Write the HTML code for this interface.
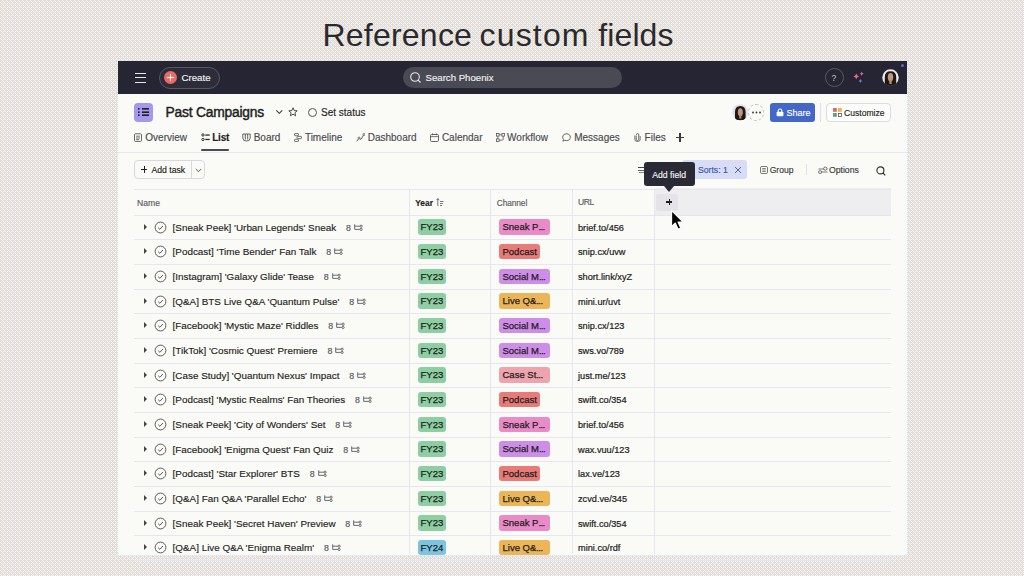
<!DOCTYPE html>
<html><head><meta charset="utf-8"><style>
*{margin:0;padding:0;box-sizing:border-box}
html,body{width:1024px;height:576px;overflow:hidden}
body{font-family:"Liberation Sans",sans-serif;background:#e9e5e2;position:relative;color:#1e1f21}
.abs{position:absolute}
#bgsvg{position:absolute;left:0;top:0}
.title{position:absolute;left:323px;top:17px;font-size:32px;letter-spacing:0.45px;color:#2a2a2c;white-space:nowrap;line-height:36px}
.win{position:absolute;left:118px;top:61px;width:789px;height:493.5px;background:#fafaf7;overflow:hidden}
.topbar{position:absolute;left:0;top:0;width:789px;height:33px;background:#252534}
.w{position:absolute;white-space:nowrap;line-height:12px}
.tab{position:absolute;top:132px;font-size:10px;color:#4a4a4d;white-space:nowrap;line-height:12px}
.hline{position:absolute;height:1px;background:#e6e6ec}
.vline{position:absolute;width:1px;background:#e6e6ec}
.row{position:absolute;left:0;width:1024px;height:24.667px}
.row .tri{position:absolute;left:144px;top:8.6px;width:0;height:0;border-left:3.8px solid #444;border-top:3px solid transparent;border-bottom:3px solid transparent}
.row .chk{position:absolute;left:153.7px;top:5.7px}
.row .tname{position:absolute;left:172.6px;top:6.5px;font-size:9.9px;line-height:12px;white-space:nowrap;color:#1e1f21}
.row .sub{margin-left:9.8px;font-size:8.8px;color:#555}
.row .sub svg{margin-left:3.2px;vertical-align:-0.3px}
.pill{position:absolute;top:4.3px;height:15.5px;border-radius:3px;font-size:9.5px;line-height:15.5px;padding:0 3.5px;white-space:nowrap;overflow:hidden;color:#1e1f21}
.pill.yr{left:418px;width:28.3px;background:#8dcea2;padding:0 2.5px}
.pill.yr.fy24{background:#7cc5e0}
.pill.ch{left:499px}
.pill.tr{width:50.8px}
.pink{background:#ea8bc8}
.red{background:#e87a78}
.purple{background:#cf8dea}
.orange{background:#ecb558}
.coral{background:#eea3ae}
.url{position:absolute;left:578px;top:6.5px;font-size:9.2px;line-height:12px;color:#1e1f21;white-space:nowrap}
.pill i{font-style:normal;letter-spacing:-0.6px}
.tname,.url,.pill,.tab,.w{-webkit-text-stroke:0.15px currentColor}
.pill{-webkit-text-stroke:0.25px currentColor}
.url{-webkit-text-stroke:0.22px currentColor}

</style></head><body>
<svg id="bgsvg" width="1024" height="576"><defs><pattern id="dz" width="4" height="4" patternUnits="userSpaceOnUse">
<rect width="4" height="4" fill="#d9d9fb"/>
<rect x="0" y="0" width="1" height="1" fill="#fdd6a6"/><rect x="2" y="0" width="1" height="1" fill="#fbfba6"/>
<rect x="1" y="1" width="1" height="1" fill="#fbfba6"/><rect x="3" y="1" width="1" height="1" fill="#f7f7fd"/>
<rect x="0" y="2" width="1" height="1" fill="#fbfba6"/><rect x="2" y="2" width="1" height="1" fill="#fdd6a6"/>
<rect x="1" y="3" width="1" height="1" fill="#f7f7fd"/><rect x="3" y="3" width="1" height="1" fill="#f7f7fd"/>
</pattern></defs><rect width="1024" height="576" fill="url(#dz)"/></svg>
<div class="title" style="left:322.5px;letter-spacing:0.22px">Reference</div><div class="title" style="left:479.6px;letter-spacing:1.15px">custom</div><div class="title" style="left:598.3px;letter-spacing:0.1px">fields</div>
<div class="win">
 <div class="topbar"></div>
</div>
<!-- absolute page coords below -->
<!-- hamburger -->
<div class="abs" style="left:135px;top:72.5px;width:11px;height:1.2px;background:#e8e8e8"></div>
<div class="abs" style="left:135px;top:77px;width:11px;height:1.2px;background:#e8e8e8"></div>
<div class="abs" style="left:135px;top:81.5px;width:11px;height:1.2px;background:#e8e8e8"></div>
<!-- create -->
<div class="abs" style="left:159px;top:66.5px;width:60.5px;height:22px;border-radius:11px;border:1px solid #58585e;background:#2c2c3a"></div>
<div class="abs" style="left:163.6px;top:70.9px;width:13px;height:13px;border-radius:50%;background:#ee6b64"></div>
<div class="abs" style="left:169.5px;top:74px;width:1.3px;height:7px;background:#fff"></div>
<div class="abs" style="left:166.6px;top:76.9px;width:7px;height:1.3px;background:#fff"></div>
<div class="w" style="left:181.5px;top:71.5px;font-size:9.7px;color:#f2f2f2">Create</div>
<!-- search -->
<div class="abs" style="left:402.7px;top:66.8px;width:219.3px;height:21.5px;border-radius:11px;background:#4a4a55"></div>
<svg class="abs" style="left:409px;top:71px" width="13" height="13" viewBox="0 0 13 13"><circle cx="6" cy="6" r="4.3" fill="none" stroke="#e6e6e6" stroke-width="1.1"/><path d="M9.1 9.1 L11.5 11.5" stroke="#e6e6e6" stroke-width="1.1"/></svg>
<div class="w" style="left:425.5px;top:71.5px;font-size:9.65px;color:#f0f0f0">Search Phoenix</div>
<!-- help -->
<div class="abs" style="left:825px;top:68px;width:18.8px;height:18.8px;border-radius:50%;border:1px solid #5a5a5e"></div>
<div class="abs" style="left:831.6px;top:72.5px;font-size:8.5px;line-height:10px;color:#c8c8c8;font-family:'Liberation Sans',sans-serif">?</div>
<!-- sparkles -->
<svg class="abs" style="left:850px;top:70px" width="16" height="16" viewBox="0 0 16 16">
<path d="M6.3 3.6 Q6.8 5.9 9 6.4 Q6.8 6.9 6.3 9.2 Q5.8 6.9 3.6 6.4 Q5.8 5.9 6.3 3.6Z" fill="#e96a7c"/>
<path d="M11.7 1.6 Q12 3.3 13.6 3.7 Q12 4.1 11.7 5.8 Q11.4 4.1 9.8 3.7 Q11.4 3.3 11.7 1.6Z" fill="#d66f9e"/>
<path d="M10.4 8.8 Q10.7 10.5 12.3 10.9 Q10.7 11.3 10.4 13 Q10.1 11.3 8.5 10.9 Q10.1 10.5 10.4 8.8Z" fill="#6e7ad8"/>
</svg>
<!-- avatar top -->
<svg class="abs" style="left:882px;top:69px" width="17" height="17" viewBox="0 0 17 17"><defs><clipPath id="ca1"><circle cx="8.5" cy="8.5" r="8.2"/></clipPath></defs>
<g clip-path="url(#ca1)"><rect width="17" height="17" fill="#ecebf2"/><path d="M2.8 17 V8 Q2.8 2.2 8.5 2.2 Q14.2 2.2 14.2 8 V17Z" fill="#1d1716"/><ellipse cx="8.5" cy="8.3" rx="2.7" ry="4.2" fill="#c3977c"/><path d="M3 17 Q4 13 8.5 13.5 Q13 13 14 17Z" fill="#1d1716"/><rect x="7.3" y="11" width="2.4" height="4" fill="#b58a70"/></g></svg>
<div class="abs" style="left:900.5px;top:63.8px;width:3.6px;height:3.6px;border-radius:50%;background:#6266e0"></div>

<!-- project header -->
<div class="abs" style="left:134px;top:102.6px;width:19.2px;height:19.2px;border-radius:4px;background:#a597ee"></div>
<svg class="abs" style="left:137px;top:107px" width="13" height="10" viewBox="0 0 13 10">
<g fill="#1e1f21"><rect x="1" y="1" width="1.6" height="1.6"/><rect x="1" y="4.4" width="1.6" height="1.6"/><rect x="1" y="7.4" width="1.6" height="1.6"/>
<rect x="5" y="1" width="7" height="1.6"/><rect x="5" y="4.4" width="7" height="1.6"/><rect x="5" y="7.4" width="7" height="1.6"/></g></svg>
<div class="w" style="left:165.5px;top:105.3px;font-size:13.8px;line-height:16px;letter-spacing:-0.2px;color:#1e1f21;-webkit-text-stroke:0.45px #1e1f21">Past Campaigns</div>
<svg class="abs" style="left:275px;top:109px" width="9" height="6" viewBox="0 0 9 6"><path d="M1.3 1.3 L4.3 4.3 L7.3 1.3" fill="none" stroke="#3a3a3c" stroke-width="1.1"/></svg>
<svg class="abs" style="left:288px;top:107px" width="10" height="10" viewBox="0 0 10 10"><path d="M5 0.8 L6.2 3.6 L9.2 3.8 L6.9 5.8 L7.6 8.8 L5 7.2 L2.4 8.8 L3.1 5.8 L0.8 3.8 L3.8 3.6Z" fill="none" stroke="#3a3a3c" stroke-width="0.9" stroke-linejoin="round"/></svg>
<div class="abs" style="left:308px;top:108.2px;width:9px;height:9px;border-radius:50%;border:1px solid #555"></div>
<div class="w" style="left:321px;top:106.5px;font-size:10px;color:#1e1f21">Set status</div>

<!-- right header -->
<div class="abs" style="left:748px;top:104px;width:15.5px;height:16.5px;border-radius:50%;border:1px dashed #c5c5d0;background:#fafaf7"></div>
<svg class="abs" style="left:750.5px;top:111px" width="11" height="3" viewBox="0 0 11 3"><circle cx="2" cy="1.5" r="0.9" fill="#333"/><circle cx="5.5" cy="1.5" r="0.9" fill="#333"/><circle cx="9" cy="1.5" r="0.9" fill="#333"/></svg>
<svg class="abs" style="left:731.8px;top:104px" width="16.5" height="16.5" viewBox="0 0 16.5 16.5"><defs><clipPath id="ca2"><circle cx="8.25" cy="8.25" r="8"/></clipPath></defs>
<g clip-path="url(#ca2)"><rect width="16.5" height="16.5" fill="#e2e1ea"/><path d="M3 16.5 V8 Q3 2 8.3 2 Q13.6 2 13.6 8 V16.5Z" fill="#1d1716"/><ellipse cx="8.3" cy="8.3" rx="2.5" ry="4" fill="#c3977c"/><path d="M2 16.5 Q4 13.2 8.3 13.6 Q12.6 13.2 14.6 16.5Z" fill="#1d1716"/><rect x="7.2" y="11" width="2.2" height="3.5" fill="#b58a70"/></g></svg>
<div class="abs" style="left:769.8px;top:102.8px;width:45px;height:19px;border-radius:3px;background:#4267c8"></div>
<svg class="abs" style="left:776px;top:107.5px" width="8" height="9" viewBox="0 0 8 9"><path d="M2.2 4 V2.8 A1.8 1.8 0 0 1 5.8 2.8 V4" fill="none" stroke="#fff" stroke-width="1.1"/><rect x="0.6" y="3.8" width="6.8" height="4.4" rx="0.8" fill="#fff"/></svg>
<div class="w" style="left:786.6px;top:106.5px;font-size:9px;color:#fff">Share</div>
<div class="vline" style="left:820px;top:103px;height:19px;background:#e0e0e6"></div>
<div class="abs" style="left:826.3px;top:102.8px;width:64.4px;height:19px;border-radius:4px;border:1px solid #dcdce2;background:#fdfdfc"></div>
<svg class="abs" style="left:832.5px;top:107.5px" width="9" height="9" viewBox="0 0 9 9"><rect x="0" y="0" width="3.8" height="3.8" fill="#e06a5e"/><rect x="5" y="0" width="3.8" height="3.8" fill="#e2b65c"/><rect x="0" y="5" width="3.8" height="3.8" fill="#5da37d"/><rect x="5.4" y="5.4" width="3" height="3" fill="none" stroke="#555" stroke-width="0.8"/></svg>
<div class="w" style="left:844px;top:106.5px;font-size:8.6px;color:#1e1f21">Customize</div>

<!-- tabs -->
<svg class="abs" style="left:134px;top:133px" width="8" height="9" viewBox="0 0 8 9"><rect x="0.5" y="0.8" width="7" height="7.6" rx="1" fill="none" stroke="#555" stroke-width="0.9"/><path d="M2 3.2 H6 M2 5 H6 M2 6.6 H5" stroke="#555" stroke-width="0.8"/></svg>
<div class="tab" style="left:145.3px">Overview</div>
<svg class="abs" style="left:200.5px;top:132.8px" width="10" height="9" viewBox="0 0 10 9"><g fill="none" stroke="#1e1f21" stroke-width="1"><rect x="0.9" y="0.9" width="2.2" height="2.2" rx="1"/><rect x="0.9" y="5.4" width="2.2" height="2.2" rx="1"/></g><g fill="#2a2a2c"><rect x="4.3" y="1.4" width="4.4" height="1.3"/><rect x="4.3" y="5.8" width="4.4" height="1.3"/></g></svg>
<div class="tab" style="left:212.2px;font-weight:bold;color:#1e1f21;letter-spacing:-0.2px">List</div>
<div class="abs" style="left:201px;top:149.3px;width:28px;height:2px;background:#4b4b4f;border-radius:1px"></div>
<svg class="abs" style="left:242px;top:133px" width="9" height="9" viewBox="0 0 9 9"><path d="M0.8 1 H8.2 V5 Q8.2 8 4.5 8 Q0.8 8 0.8 5Z M3.3 1 V6.5 M5.7 1 V6.5" fill="none" stroke="#555" stroke-width="0.9"/></svg>
<div class="tab" style="left:253.7px">Board</div>
<svg class="abs" style="left:294px;top:133px" width="8" height="9" viewBox="0 0 8 9"><rect x="0.5" y="0.5" width="4" height="2.2" rx="0.6" fill="none" stroke="#555" stroke-width="0.8"/><rect x="3" y="3.4" width="4.5" height="2.2" rx="0.6" fill="none" stroke="#555" stroke-width="0.8"/><rect x="0.5" y="6.3" width="4" height="2.2" rx="0.6" fill="none" stroke="#555" stroke-width="0.8"/></svg>
<div class="tab" style="left:304.9px">Timeline</div>
<svg class="abs" style="left:356px;top:133px" width="9" height="9" viewBox="0 0 9 9"><path d="M0.8 8.2 L3 5 L5 6.5 L8 1.2" fill="none" stroke="#555" stroke-width="0.9"/><circle cx="3" cy="5" r="1" fill="#fbfbfa" stroke="#555" stroke-width="0.8"/><circle cx="8" cy="1.5" r="1" fill="#fbfbfa" stroke="#555" stroke-width="0.8"/></svg>
<div class="tab" style="left:367.7px">Dashboard</div>
<svg class="abs" style="left:430px;top:133px" width="9" height="9" viewBox="0 0 9 9"><rect x="0.5" y="1.5" width="8" height="7" rx="1.2" fill="none" stroke="#555" stroke-width="0.9"/><path d="M0.5 3.6 H8.5 M2.6 0.3 V2.2 M6.4 0.3 V2.2" stroke="#555" stroke-width="0.8"/></svg>
<div class="tab" style="left:441.9px">Calendar</div>
<svg class="abs" style="left:496px;top:133px" width="9" height="9" viewBox="0 0 9 9"><rect x="0.5" y="0.5" width="2.6" height="2.6" fill="none" stroke="#555" stroke-width="0.8"/><rect x="5.9" y="0.5" width="2.6" height="2.6" fill="none" stroke="#555" stroke-width="0.8"/><rect x="0.5" y="5.9" width="2.6" height="2.6" fill="none" stroke="#555" stroke-width="0.8"/><path d="M3.1 1.8 H5.9 M1.8 3.1 V5.9 M3.1 7.2 H6 Q7.2 7.2 7.2 6 V3.1" fill="none" stroke="#555" stroke-width="0.8"/></svg>
<div class="tab" style="left:507.1px">Workflow</div>
<svg class="abs" style="left:562px;top:133px" width="9" height="9" viewBox="0 0 9 9"><path d="M4.5 0.8 C7 0.8 8.3 2.3 8.3 4.2 C8.3 6.1 7 7.6 4.5 7.6 C3.8 7.6 3.2 7.5 2.7 7.3 L0.9 8.2 L1.4 6.5 C0.9 5.9 0.7 5.1 0.7 4.2 C0.7 2.3 2 0.8 4.5 0.8Z" fill="none" stroke="#555" stroke-width="0.9"/></svg>
<div class="tab" style="left:574.2px">Messages</div>
<svg class="abs" style="left:634px;top:133px" width="7" height="9" viewBox="0 0 7 9"><path d="M2.2 2.5 V6.2 Q2.2 7.5 3.5 7.5 Q4.8 7.5 4.8 6.2 V1.8 Q4.8 0.6 3.6 0.6 Q2.4 0.6 2.4 1.8" fill="none" stroke="#555" stroke-width="0.9"/><path d="M0.8 2.5 V6.5 Q0.8 8.5 3.5 8.5 Q6.2 8.5 6.2 6.5 V3" fill="none" stroke="#555" stroke-width="0.8"/></svg>
<div class="tab" style="left:644.6px">Files</div>
<div class="abs" style="left:675.7px;top:137px;width:8.6px;height:1.2px;background:#3a3a3c"></div>
<div class="abs" style="left:679.4px;top:133.3px;width:1.2px;height:8.6px;background:#3a3a3c"></div>
<div class="hline" style="left:118px;top:151.5px;width:789px"></div>

<!-- toolbar -->
<div class="abs" style="left:134.2px;top:160.3px;width:70.8px;height:19px;border-radius:4px;border:1px solid #d8d8de"></div>
<div class="vline" style="left:190.5px;top:161px;height:18px;background:#d8d8de"></div>
<div class="abs" style="left:140.8px;top:169px;width:6.6px;height:1.1px;background:#1e1f21"></div>
<div class="abs" style="left:143.6px;top:166.2px;width:1.1px;height:6.6px;background:#1e1f21"></div>
<div class="w" style="left:151.4px;top:164px;font-size:8.7px;color:#1e1f21">Add task</div>
<svg class="abs" style="left:194.5px;top:167.5px" width="7" height="5" viewBox="0 0 7 5"><path d="M0.8 1 L3.5 3.7 L6.2 1" fill="none" stroke="#444" stroke-width="0.9"/></svg>

<!-- sort icon partially -->
<div class="abs" style="left:637.5px;top:167px;width:7px;height:1px;background:#444"></div>
<div class="abs" style="left:637.5px;top:169.8px;width:6px;height:1px;background:#666"></div>
<div class="abs" style="left:639px;top:172.3px;width:5px;height:1px;background:#888"></div>
<!-- sorts chip -->
<div class="abs" style="left:682px;top:159.9px;width:65px;height:19px;border-radius:3px;background:#d8dcf6"></div>
<div class="w" style="left:697.9px;top:164px;font-size:8.7px;color:#3d5a9c">Sorts: 1</div>
<svg class="abs" style="left:734px;top:165.5px" width="8" height="8" viewBox="0 0 8 8"><path d="M1 1 L7 7 M7 1 L1 7" stroke="#3d5a9c" stroke-width="0.9"/></svg>
<!-- group -->
<svg class="abs" style="left:759.5px;top:166px" width="8" height="8" viewBox="0 0 8 8"><rect x="0.5" y="0.5" width="7" height="7" rx="1.3" fill="none" stroke="#555" stroke-width="0.8"/><path d="M2.2 2.5 H5.8 M2.2 4 H5.8 M2.2 5.5 H5.8" stroke="#555" stroke-width="0.7"/></svg>
<div class="w" style="left:769.7px;top:164px;font-size:8.6px;color:#3a3a3c">Group</div>
<div class="vline" style="left:806px;top:164px;height:11px;background:#e0e0e6"></div>
<svg class="abs" style="left:817.5px;top:165.5px" width="10" height="9" viewBox="0 0 10 9"><path d="M0.5 6 H9.5 M0.5 3 H9.5" stroke="#555" stroke-width="0.8"/><rect x="0.8" y="4.8" width="2.6" height="2.6" rx="0.5" fill="#fbfbfa" stroke="#555" stroke-width="0.8"/><circle cx="7.3" cy="2.6" r="1.6" fill="#fbfbfa" stroke="#555" stroke-width="0.8"/></svg>
<div class="w" style="left:828.9px;top:164px;font-size:8.7px;color:#3a3a3c">Options</div>
<svg class="abs" style="left:876px;top:165.5px" width="10" height="10" viewBox="0 0 10 10"><circle cx="4.4" cy="4.4" r="3.5" fill="none" stroke="#2e2e30" stroke-width="1.1"/><path d="M7 7 L9.3 9.3" stroke="#2e2e30" stroke-width="1.1"/></svg>

<!-- table header -->
<div class="abs" style="left:653.75px;top:188px;width:236.75px;height:27px;background:#eeeef0"></div>
<div class="abs" style="left:655.5px;top:193.5px;width:22.5px;height:17.5px;background:#e5e3e8;border-radius:2px"></div>
<div class="hline" style="left:134px;top:188.9px;width:756.5px"></div>
<div class="w" style="left:137px;top:196.5px;font-size:8.6px;color:#5a5b5e">Name</div>
<div class="w" style="left:415.2px;top:196.5px;font-size:8.4px;font-weight:bold;color:#1e1f21">Year</div>
<svg class="abs" style="left:436px;top:197.5px" width="8" height="9" viewBox="0 0 8 9"><path d="M1.8 0.6 V8 M0.3 2.2 L1.8 0.6 L3.3 2.2 M4 3.5 H7.5 M4 5.5 H6.8 M4 7.5 H6" fill="none" stroke="#555" stroke-width="0.8"/></svg>
<div class="w" style="left:496.7px;top:196.5px;font-size:8.4px;color:#5a5b5e;letter-spacing:-0.1px">Channel</div>
<div class="w" style="left:578px;top:196px;font-size:8.6px;color:#5a5b5e;letter-spacing:-0.4px">URL</div>
<div class="abs" style="left:666.2px;top:201.3px;width:6px;height:1.4px;background:#1e1f21"></div>
<div class="abs" style="left:668.5px;top:199px;width:1.4px;height:6px;background:#1e1f21"></div>
<div class="vline" style="left:409.3px;top:189px;height:365px"></div>
<div class="vline" style="left:490.4px;top:189px;height:365px"></div>
<div class="vline" style="left:572.4px;top:189px;height:365px"></div>
<div class="vline" style="left:653.75px;top:189px;height:365px"></div>
<div class="hline" style="left:134px;top:214.50px;width:756.5px"></div>
<div class="hline" style="left:134px;top:239.17px;width:756.5px"></div>
<div class="hline" style="left:134px;top:263.83px;width:756.5px"></div>
<div class="hline" style="left:134px;top:288.50px;width:756.5px"></div>
<div class="hline" style="left:134px;top:313.17px;width:756.5px"></div>
<div class="hline" style="left:134px;top:337.84px;width:756.5px"></div>
<div class="hline" style="left:134px;top:362.50px;width:756.5px"></div>
<div class="hline" style="left:134px;top:387.17px;width:756.5px"></div>
<div class="hline" style="left:134px;top:411.84px;width:756.5px"></div>
<div class="hline" style="left:134px;top:436.50px;width:756.5px"></div>
<div class="hline" style="left:134px;top:461.17px;width:756.5px"></div>
<div class="hline" style="left:134px;top:485.84px;width:756.5px"></div>
<div class="hline" style="left:134px;top:510.50px;width:756.5px"></div>
<div class="hline" style="left:134px;top:535.17px;width:756.5px"></div>
<div class="hline" style="left:134px;top:559.84px;width:756.5px"></div>
<div class="row" style="top:215.000px">
<div class="tri"></div>
<svg class="chk" width="13" height="13" viewBox="0 0 13 13"><circle cx="6.5" cy="6.5" r="5.4" fill="none" stroke="#5a5b5d" stroke-width="1"/><path d="M4.2 6.7 L5.9 8.3 L8.9 5" fill="none" stroke="#5a5b5d" stroke-width="1"/></svg>
<div class="tname">[Sneak Peek] 'Urban Legends' Sneak<span class="sub">8<svg width="9" height="7" viewBox="0 0 9 7"><path d="M0.7 0.3 V5.4 H5.8 M0.7 2.2 H5.8" fill="none" stroke="#5a5b5d" stroke-width="0.9"/><circle cx="7.1" cy="2.2" r="1.1" fill="none" stroke="#5a5b5d" stroke-width="0.9"/><circle cx="7.1" cy="5.4" r="1.1" fill="none" stroke="#5a5b5d" stroke-width="0.9"/></svg></span></div>
<div class="pill yr ">FY23</div>
<div class="pill ch pink tr">Sneak P<i>...</i></div>
<div class="url">brief.to/456</div>
</div>
<div class="row" style="top:239.667px">
<div class="tri"></div>
<svg class="chk" width="13" height="13" viewBox="0 0 13 13"><circle cx="6.5" cy="6.5" r="5.4" fill="none" stroke="#5a5b5d" stroke-width="1"/><path d="M4.2 6.7 L5.9 8.3 L8.9 5" fill="none" stroke="#5a5b5d" stroke-width="1"/></svg>
<div class="tname">[Podcast] 'Time Bender' Fan Talk<span class="sub">8<svg width="9" height="7" viewBox="0 0 9 7"><path d="M0.7 0.3 V5.4 H5.8 M0.7 2.2 H5.8" fill="none" stroke="#5a5b5d" stroke-width="0.9"/><circle cx="7.1" cy="2.2" r="1.1" fill="none" stroke="#5a5b5d" stroke-width="0.9"/><circle cx="7.1" cy="5.4" r="1.1" fill="none" stroke="#5a5b5d" stroke-width="0.9"/></svg></span></div>
<div class="pill yr ">FY23</div>
<div class="pill ch red">Podcast</div>
<div class="url">snip.cx/uvw</div>
</div>
<div class="row" style="top:264.334px">
<div class="tri"></div>
<svg class="chk" width="13" height="13" viewBox="0 0 13 13"><circle cx="6.5" cy="6.5" r="5.4" fill="none" stroke="#5a5b5d" stroke-width="1"/><path d="M4.2 6.7 L5.9 8.3 L8.9 5" fill="none" stroke="#5a5b5d" stroke-width="1"/></svg>
<div class="tname">[Instagram] 'Galaxy Glide' Tease<span class="sub">8<svg width="9" height="7" viewBox="0 0 9 7"><path d="M0.7 0.3 V5.4 H5.8 M0.7 2.2 H5.8" fill="none" stroke="#5a5b5d" stroke-width="0.9"/><circle cx="7.1" cy="2.2" r="1.1" fill="none" stroke="#5a5b5d" stroke-width="0.9"/><circle cx="7.1" cy="5.4" r="1.1" fill="none" stroke="#5a5b5d" stroke-width="0.9"/></svg></span></div>
<div class="pill yr ">FY23</div>
<div class="pill ch purple tr">Social M<i>...</i></div>
<div class="url">short.link/xyZ</div>
</div>
<div class="row" style="top:289.001px">
<div class="tri"></div>
<svg class="chk" width="13" height="13" viewBox="0 0 13 13"><circle cx="6.5" cy="6.5" r="5.4" fill="none" stroke="#5a5b5d" stroke-width="1"/><path d="M4.2 6.7 L5.9 8.3 L8.9 5" fill="none" stroke="#5a5b5d" stroke-width="1"/></svg>
<div class="tname">[Q&amp;A] BTS Live Q&amp;A 'Quantum Pulse'<span class="sub">8<svg width="9" height="7" viewBox="0 0 9 7"><path d="M0.7 0.3 V5.4 H5.8 M0.7 2.2 H5.8" fill="none" stroke="#5a5b5d" stroke-width="0.9"/><circle cx="7.1" cy="2.2" r="1.1" fill="none" stroke="#5a5b5d" stroke-width="0.9"/><circle cx="7.1" cy="5.4" r="1.1" fill="none" stroke="#5a5b5d" stroke-width="0.9"/></svg></span></div>
<div class="pill yr ">FY23</div>
<div class="pill ch orange tr">Live Q&amp;<i>...</i></div>
<div class="url">mini.ur/uvt</div>
</div>
<div class="row" style="top:313.668px">
<div class="tri"></div>
<svg class="chk" width="13" height="13" viewBox="0 0 13 13"><circle cx="6.5" cy="6.5" r="5.4" fill="none" stroke="#5a5b5d" stroke-width="1"/><path d="M4.2 6.7 L5.9 8.3 L8.9 5" fill="none" stroke="#5a5b5d" stroke-width="1"/></svg>
<div class="tname">[Facebook] 'Mystic Maze' Riddles<span class="sub">8<svg width="9" height="7" viewBox="0 0 9 7"><path d="M0.7 0.3 V5.4 H5.8 M0.7 2.2 H5.8" fill="none" stroke="#5a5b5d" stroke-width="0.9"/><circle cx="7.1" cy="2.2" r="1.1" fill="none" stroke="#5a5b5d" stroke-width="0.9"/><circle cx="7.1" cy="5.4" r="1.1" fill="none" stroke="#5a5b5d" stroke-width="0.9"/></svg></span></div>
<div class="pill yr ">FY23</div>
<div class="pill ch purple tr">Social M<i>...</i></div>
<div class="url">snip.cx/123</div>
</div>
<div class="row" style="top:338.335px">
<div class="tri"></div>
<svg class="chk" width="13" height="13" viewBox="0 0 13 13"><circle cx="6.5" cy="6.5" r="5.4" fill="none" stroke="#5a5b5d" stroke-width="1"/><path d="M4.2 6.7 L5.9 8.3 L8.9 5" fill="none" stroke="#5a5b5d" stroke-width="1"/></svg>
<div class="tname">[TikTok] 'Cosmic Quest' Premiere<span class="sub">8<svg width="9" height="7" viewBox="0 0 9 7"><path d="M0.7 0.3 V5.4 H5.8 M0.7 2.2 H5.8" fill="none" stroke="#5a5b5d" stroke-width="0.9"/><circle cx="7.1" cy="2.2" r="1.1" fill="none" stroke="#5a5b5d" stroke-width="0.9"/><circle cx="7.1" cy="5.4" r="1.1" fill="none" stroke="#5a5b5d" stroke-width="0.9"/></svg></span></div>
<div class="pill yr ">FY23</div>
<div class="pill ch purple tr">Social M<i>...</i></div>
<div class="url">sws.vo/789</div>
</div>
<div class="row" style="top:363.002px">
<div class="tri"></div>
<svg class="chk" width="13" height="13" viewBox="0 0 13 13"><circle cx="6.5" cy="6.5" r="5.4" fill="none" stroke="#5a5b5d" stroke-width="1"/><path d="M4.2 6.7 L5.9 8.3 L8.9 5" fill="none" stroke="#5a5b5d" stroke-width="1"/></svg>
<div class="tname">[Case Study] 'Quantum Nexus' Impact<span class="sub">8<svg width="9" height="7" viewBox="0 0 9 7"><path d="M0.7 0.3 V5.4 H5.8 M0.7 2.2 H5.8" fill="none" stroke="#5a5b5d" stroke-width="0.9"/><circle cx="7.1" cy="2.2" r="1.1" fill="none" stroke="#5a5b5d" stroke-width="0.9"/><circle cx="7.1" cy="5.4" r="1.1" fill="none" stroke="#5a5b5d" stroke-width="0.9"/></svg></span></div>
<div class="pill yr ">FY23</div>
<div class="pill ch coral tr">Case St<i>...</i></div>
<div class="url">just.me/123</div>
</div>
<div class="row" style="top:387.669px">
<div class="tri"></div>
<svg class="chk" width="13" height="13" viewBox="0 0 13 13"><circle cx="6.5" cy="6.5" r="5.4" fill="none" stroke="#5a5b5d" stroke-width="1"/><path d="M4.2 6.7 L5.9 8.3 L8.9 5" fill="none" stroke="#5a5b5d" stroke-width="1"/></svg>
<div class="tname">[Podcast] 'Mystic Realms' Fan Theories<span class="sub">8<svg width="9" height="7" viewBox="0 0 9 7"><path d="M0.7 0.3 V5.4 H5.8 M0.7 2.2 H5.8" fill="none" stroke="#5a5b5d" stroke-width="0.9"/><circle cx="7.1" cy="2.2" r="1.1" fill="none" stroke="#5a5b5d" stroke-width="0.9"/><circle cx="7.1" cy="5.4" r="1.1" fill="none" stroke="#5a5b5d" stroke-width="0.9"/></svg></span></div>
<div class="pill yr ">FY23</div>
<div class="pill ch red">Podcast</div>
<div class="url">swift.co/354</div>
</div>
<div class="row" style="top:412.336px">
<div class="tri"></div>
<svg class="chk" width="13" height="13" viewBox="0 0 13 13"><circle cx="6.5" cy="6.5" r="5.4" fill="none" stroke="#5a5b5d" stroke-width="1"/><path d="M4.2 6.7 L5.9 8.3 L8.9 5" fill="none" stroke="#5a5b5d" stroke-width="1"/></svg>
<div class="tname">[Sneak Peek] 'City of Wonders' Set<span class="sub">8<svg width="9" height="7" viewBox="0 0 9 7"><path d="M0.7 0.3 V5.4 H5.8 M0.7 2.2 H5.8" fill="none" stroke="#5a5b5d" stroke-width="0.9"/><circle cx="7.1" cy="2.2" r="1.1" fill="none" stroke="#5a5b5d" stroke-width="0.9"/><circle cx="7.1" cy="5.4" r="1.1" fill="none" stroke="#5a5b5d" stroke-width="0.9"/></svg></span></div>
<div class="pill yr ">FY23</div>
<div class="pill ch pink tr">Sneak P<i>...</i></div>
<div class="url">brief.to/456</div>
</div>
<div class="row" style="top:437.003px">
<div class="tri"></div>
<svg class="chk" width="13" height="13" viewBox="0 0 13 13"><circle cx="6.5" cy="6.5" r="5.4" fill="none" stroke="#5a5b5d" stroke-width="1"/><path d="M4.2 6.7 L5.9 8.3 L8.9 5" fill="none" stroke="#5a5b5d" stroke-width="1"/></svg>
<div class="tname">[Facebook] 'Enigma Quest' Fan Quiz<span class="sub">8<svg width="9" height="7" viewBox="0 0 9 7"><path d="M0.7 0.3 V5.4 H5.8 M0.7 2.2 H5.8" fill="none" stroke="#5a5b5d" stroke-width="0.9"/><circle cx="7.1" cy="2.2" r="1.1" fill="none" stroke="#5a5b5d" stroke-width="0.9"/><circle cx="7.1" cy="5.4" r="1.1" fill="none" stroke="#5a5b5d" stroke-width="0.9"/></svg></span></div>
<div class="pill yr ">FY23</div>
<div class="pill ch purple tr">Social M<i>...</i></div>
<div class="url">wax.vuu/123</div>
</div>
<div class="row" style="top:461.670px">
<div class="tri"></div>
<svg class="chk" width="13" height="13" viewBox="0 0 13 13"><circle cx="6.5" cy="6.5" r="5.4" fill="none" stroke="#5a5b5d" stroke-width="1"/><path d="M4.2 6.7 L5.9 8.3 L8.9 5" fill="none" stroke="#5a5b5d" stroke-width="1"/></svg>
<div class="tname">[Podcast] 'Star Explorer' BTS<span class="sub">8<svg width="9" height="7" viewBox="0 0 9 7"><path d="M0.7 0.3 V5.4 H5.8 M0.7 2.2 H5.8" fill="none" stroke="#5a5b5d" stroke-width="0.9"/><circle cx="7.1" cy="2.2" r="1.1" fill="none" stroke="#5a5b5d" stroke-width="0.9"/><circle cx="7.1" cy="5.4" r="1.1" fill="none" stroke="#5a5b5d" stroke-width="0.9"/></svg></span></div>
<div class="pill yr ">FY23</div>
<div class="pill ch red">Podcast</div>
<div class="url">lax.ve/123</div>
</div>
<div class="row" style="top:486.337px">
<div class="tri"></div>
<svg class="chk" width="13" height="13" viewBox="0 0 13 13"><circle cx="6.5" cy="6.5" r="5.4" fill="none" stroke="#5a5b5d" stroke-width="1"/><path d="M4.2 6.7 L5.9 8.3 L8.9 5" fill="none" stroke="#5a5b5d" stroke-width="1"/></svg>
<div class="tname">[Q&amp;A] Fan Q&amp;A 'Parallel Echo'<span class="sub">8<svg width="9" height="7" viewBox="0 0 9 7"><path d="M0.7 0.3 V5.4 H5.8 M0.7 2.2 H5.8" fill="none" stroke="#5a5b5d" stroke-width="0.9"/><circle cx="7.1" cy="2.2" r="1.1" fill="none" stroke="#5a5b5d" stroke-width="0.9"/><circle cx="7.1" cy="5.4" r="1.1" fill="none" stroke="#5a5b5d" stroke-width="0.9"/></svg></span></div>
<div class="pill yr ">FY23</div>
<div class="pill ch orange tr">Live Q&amp;<i>...</i></div>
<div class="url">zcvd.ve/345</div>
</div>
<div class="row" style="top:511.004px">
<div class="tri"></div>
<svg class="chk" width="13" height="13" viewBox="0 0 13 13"><circle cx="6.5" cy="6.5" r="5.4" fill="none" stroke="#5a5b5d" stroke-width="1"/><path d="M4.2 6.7 L5.9 8.3 L8.9 5" fill="none" stroke="#5a5b5d" stroke-width="1"/></svg>
<div class="tname">[Sneak Peek] 'Secret Haven' Preview<span class="sub">8<svg width="9" height="7" viewBox="0 0 9 7"><path d="M0.7 0.3 V5.4 H5.8 M0.7 2.2 H5.8" fill="none" stroke="#5a5b5d" stroke-width="0.9"/><circle cx="7.1" cy="2.2" r="1.1" fill="none" stroke="#5a5b5d" stroke-width="0.9"/><circle cx="7.1" cy="5.4" r="1.1" fill="none" stroke="#5a5b5d" stroke-width="0.9"/></svg></span></div>
<div class="pill yr ">FY23</div>
<div class="pill ch pink tr">Sneak P<i>...</i></div>
<div class="url">swift.co/354</div>
</div>
<div class="row" style="top:535.671px">
<div class="tri"></div>
<svg class="chk" width="13" height="13" viewBox="0 0 13 13"><circle cx="6.5" cy="6.5" r="5.4" fill="none" stroke="#5a5b5d" stroke-width="1"/><path d="M4.2 6.7 L5.9 8.3 L8.9 5" fill="none" stroke="#5a5b5d" stroke-width="1"/></svg>
<div class="tname">[Q&amp;A] Live Q&amp;A 'Enigma Realm'<span class="sub">8<svg width="9" height="7" viewBox="0 0 9 7"><path d="M0.7 0.3 V5.4 H5.8 M0.7 2.2 H5.8" fill="none" stroke="#5a5b5d" stroke-width="0.9"/><circle cx="7.1" cy="2.2" r="1.1" fill="none" stroke="#5a5b5d" stroke-width="0.9"/><circle cx="7.1" cy="5.4" r="1.1" fill="none" stroke="#5a5b5d" stroke-width="0.9"/></svg></span></div>
<div class="pill yr fy24">FY24</div>
<div class="pill ch orange tr">Live Q&amp;<i>...</i></div>
<div class="url">mini.co/rdf</div>
</div>
<!-- tooltip -->
<div class="abs" style="left:643.7px;top:162.4px;width:51px;height:23.4px;border-radius:3px;background:#2a2a36"></div>
<div class="abs" style="left:664px;top:185.5px;width:0;height:0;border-left:5px solid transparent;border-right:5px solid transparent;border-top:6px solid #2a2a36"></div>
<div class="w" style="left:652.2px;top:168.5px;font-size:8.7px;color:#f2f2f2">Add field</div>
<!-- cursor -->
<svg class="abs" style="left:670px;top:209px" width="15" height="22" viewBox="0 0 15 22"><path d="M1.6 1.6 V17.6 L5.3 14 L8.1 20.2 L10.7 19.1 L8 13 L13.1 13 Z" fill="#000" stroke="#fff" stroke-width="1.1" stroke-linejoin="round"/></svg>

</body></html>
